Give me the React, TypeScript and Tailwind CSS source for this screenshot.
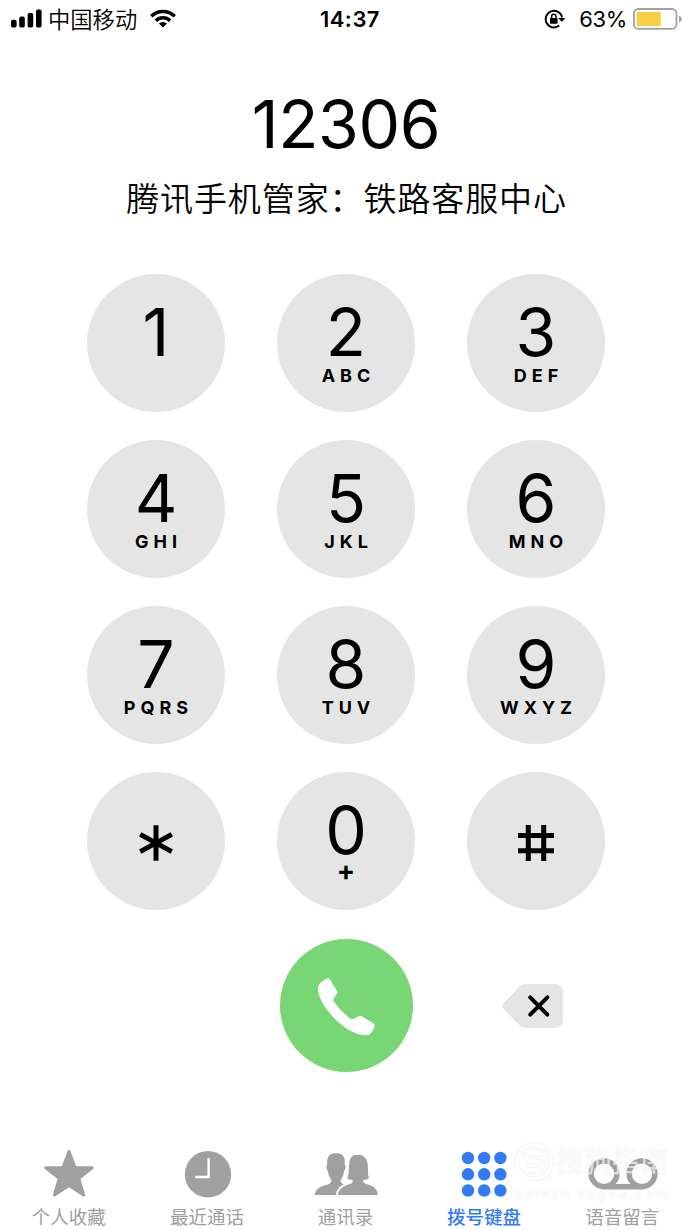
import React, { useState } from 'react';
import { clsx } from 'clsx';

const StarKey = () => (
  <svg viewBox="0 0 34 36" className="mt-[4px] h-9 w-[34px]" stroke="#000" strokeWidth="5">
    <path d="M17 0.3V35.7M1.2 9.4L32.8 26.6M1.2 26.6L32.8 9.4" />
  </svg>
);

const HashKey = () => (
  <svg viewBox="0 0 36 36" className="mt-[4px] size-9" stroke="#000" strokeWidth="5">
    <path d="M10.3 0V36M25.7 0V36M0 10.4H36M0 25.8H36" />
  </svg>
);

const KEYS: { digit: string; letters?: string; icon?: React.ReactNode }[] = [
  { digit: '1' },
  { digit: '2', letters: 'ABC' },
  { digit: '3', letters: 'DEF' },
  { digit: '4', letters: 'GHI' },
  { digit: '5', letters: 'JKL' },
  { digit: '6', letters: 'MNO' },
  { digit: '7', letters: 'PQRS' },
  { digit: '8', letters: 'TUV' },
  { digit: '9', letters: 'WXYZ' },
  { digit: '*', icon: <StarKey /> },
  { digit: '0', letters: '+' },
  { digit: '#', icon: <HashKey /> },
];

const FavoritesIcon = () => (
  <svg viewBox="0 0 50 48" className="h-12 w-[50px]" fill="currentColor" stroke="currentColor" strokeWidth="3" strokeLinejoin="round">
    <path d="M25 1.5L31.2 17.8H48.3L34.8 28.4L39.6 45L25 35.4L10.4 45L15.2 28.4L1.7 17.8H18.8Z" />
  </svg>
);

const RecentsIcon = () => (
  <svg viewBox="0 0 48 48" className="size-12" fill="none">
    <circle cx="24" cy="24.3" r="23.2" fill="currentColor" />
    <path d="M24.6 8V27H11.2" stroke="#fff" strokeWidth="2.4" />
  </svg>
);

const ContactsIcon = () => (
  <svg viewBox="0 0 189 126" className="h-[42px] w-[63px] overflow-visible" fill="currentColor">
    <path d="M0 126C0 108 14 101 36 95C46 92 49 88 49 80C42 72 40 64 39 55C34 50 33 38 37 34C34 8 46 1 63 1C80 1 92 8 89 34C93 38 92 50 87 55C86 64 84 72 77 80C77 88 80 92 90 95L100 126Z" />
    <path
      d="M69 126C70 108 84 99 105 93C112 90 114 88 113 81C106 81 100 79 97 76C103 62 100 50 103 30C104 10 118 4 126 6C136 2 156 10 158 32C160 52 158 62 162 76C158 79 150 81 144 82C143 88 147 91 154 93C176 99 188 108 188 126Z"
      stroke="#fff"
      strokeWidth="12"
      paintOrder="stroke"
    />
    <path d="M-6 126H195V134H-6Z" fill="#fff" />
  </svg>
);

const KeypadIcon = () => (
  <svg viewBox="0 0 48 48" className="size-12" fill="currentColor">
    {[8, 24.3, 40.5].map(cy =>
      [8, 24.2, 40.4].map(cx => <circle key={`${cx}-${cy}`} cx={cx} cy={cy} r="6.2" />)
    )}
  </svg>
);

const VoicemailIcon = () => (
  <svg viewBox="0 0 70 32" className="h-8 w-[70px]" fill="none" stroke="currentColor" strokeWidth="5.4">
    <circle cx="16" cy="15.8" r="12.9" />
    <circle cx="54" cy="15.8" r="12.9" />
    <path d="M16 28.7H54" />
  </svg>
);

const TABS = [
  { label: '个人收藏', icon: <FavoritesIcon /> },
  { label: '最近通话', icon: <RecentsIcon /> },
  { label: '通讯录', icon: <ContactsIcon /> },
  { label: '拨号键盘', icon: <KeypadIcon /> },
  { label: '语音留言', icon: <VoicemailIcon /> },
];

function StatusBar() {
  return (
    <header className="grid h-[38px] grid-cols-3 items-center text-[22px] leading-none">
      <div className="flex items-center pl-[11px]">
        <svg viewBox="0 0 31 19" className="h-[19px] w-[31px]">
          <rect x="0" y="10.8" width="5.6" height="7.7" rx="1.8" />
          <rect x="8.2" y="7.6" width="5.6" height="10.9" rx="1.8" />
          <rect x="16.6" y="4" width="5.6" height="14.5" rx="1.8" />
          <rect x="25" y="0.4" width="5.6" height="18.1" rx="1.8" />
        </svg>
        <span className="mt-[2px] ml-[6px] text-[22.3px] font-[350]">中国移动</span>
        <svg viewBox="0 0 26 19" className="ml-[13px] h-[19px] w-[26px]" fill="none" stroke="#000" strokeWidth="3.5">
          <path d="M1.3 7.2A16.6 16.6 0 0 1 24.7 7.2" />
          <path d="M5.9 11.8A10 10 0 0 1 20.1 11.8" />
          <path d="M13 18.6L8.9 14.6A5.9 5.9 0 0 1 17.1 14.6Z" fill="#000" stroke="none" />
        </svg>
      </div>
      <div className="pl-[8px] text-center font-semibold tracking-[0.5px]">14:37</div>
      <div className="flex items-center justify-end pr-[10px]">
        <svg viewBox="0 0 22 20" className="h-5 w-[22px]" fill="none" stroke="#000" strokeWidth="1.9">
          <path d="M15.2 16.6A8.3 8.3 0 1 1 18.1 8.5" />
          <path d="M14.2 9H21.4L17.8 13Z" fill="#000" stroke="none" />
          <rect x="6" y="9" width="7.6" height="5.8" rx="0.8" fill="#000" stroke="none" />
          <path d="M7.6 9.5V7.4A2.2 2.2 0 0 1 12 7.4V9.5" strokeWidth="1.5" />
        </svg>
        <span className="ml-[13px] tracking-[-0.4px]">63%</span>
        <svg viewBox="0 0 49 22" className="ml-[6px] h-[22px] w-[49px]">
          <rect x="0.9" y="1" width="42.6" height="19.8" rx="4.5" fill="none" stroke="#a0a0a0" strokeWidth="1.8" />
          <rect x="3.6" y="4" width="24.2" height="14" rx="1.2" fill="#f7ce46" />
          <path d="M46 7.5C49.6 9 49.6 13 46 14.5Z" fill="#a0a0a0" />
        </svg>
      </div>
    </header>
  );
}

function Watermark() {
  return (
    <div className="pointer-events-none absolute top-[1142px] left-[515px] w-[160px] text-white/65 [text-shadow:0_0_2px_rgba(0,0,0,0.07)]">
      <div className="flex items-center gap-[3px]">
        <svg viewBox="0 0 38 40" className="h-10 w-[38px] drop-shadow-[0_0_1px_rgba(0,0,0,0.1)]" fill="none" stroke="#fff" strokeWidth="3">
          <circle cx="19" cy="20" r="17" />
          <path d="M27 13C20 9 11 11 12 16C13 21 27 18 27 24C27 29 17 30 11 26" strokeWidth="4.5" />
          <path d="M28 31L34 37" />
        </svg>
        <span className="text-[28px] leading-10 font-medium whitespace-nowrap">搜狗指南</span>
      </div>
      <div className="mt-[3px] text-[14px] leading-[18px] font-bold tracking-[1.7px] whitespace-nowrap">zhinan.sogou.com</div>
    </div>
  );
}

export default function App() {
  const [number, setNumber] = useState('12306');
  const [activeTab, setActiveTab] = useState(3);

  return (
    <div className="relative flex h-[1230px] w-[692px] flex-col overflow-hidden bg-white font-[Inter,'Noto_Sans_CJK_SC',sans-serif] text-black">
      <StatusBar />

      {/* Dialed number */}
      <section className="flex h-[236px] flex-col items-center pt-[50px]">
        <div className="h-[72px] text-[66px] leading-[72px] tracking-[-0.4px]">{number}</div>
        <div className="mt-[15px] pl-px text-[33px] leading-[48px] font-[350] tracking-[0.9px]">腾讯手机管家：铁路客服中心</div>
      </section>

      {/* Keypad */}
      <main className="grid grid-cols-[repeat(3,138px)] justify-center gap-x-[52px] gap-y-7">
        {KEYS.map(key => (
          <button
            key={key.digit}
            aria-label={key.digit}
            onClick={() => setNumber(prev => prev + key.digit)}
            className={clsx(
              'flex size-[138px] flex-col items-center rounded-full bg-[#e5e5e5]',
              key.icon ? 'justify-center' : 'pt-[28px]'
            )}
          >
            {key.icon ?? <span className="text-[66px] leading-[60px]">{key.digit}</span>}
            {key.letters && (
              <span
                className={clsx(
                  'font-bold',
                  key.letters === '+' ? 'text-[27px] leading-[22px]' : 'pl-[5px] text-[18px] leading-7 tracking-[5px]'
                )}
              >
                {key.letters}
              </span>
            )}
          </button>
        ))}
      </main>

      {/* Call / delete */}
      <div className="mt-[29px] grid grid-cols-[repeat(3,138px)] items-center justify-center gap-x-[52px]">
        <button className="col-start-2 flex size-[133px] items-center justify-center justify-self-center rounded-full bg-[#78d674]">
          <svg viewBox="0 0 57 58" className="mt-[2px] ml-px h-[58px] w-[57px]" fill="#fff">
            <path d="M8.6 0.8Q10.7 -0.4 11.9 1.6L18.8 12.6Q19.8 14.2 18.8 15.8L15.8 20.4Q14.8 22.2 16 23.8C20.5 30 26.5 36 32 40.6Q33.6 41.8 35.4 41L40.6 38.2Q42.2 37.3 43.8 38.2L55.6 45.4Q57.2 46.4 56.6 48.2C55.2 52.6 53 57 48 57.3C28 57.5 0 28 0 10.5C0.2 5.5 4.2 3 8.6 0.8Z" />
          </svg>
        </button>
        <button onClick={() => setNumber(prev => prev.slice(0, -1))} className="ml-[35px]">
          <svg viewBox="0 0 61 44" className="h-11 w-[61px]">
            <path d="M24 0H53Q61 0 61 8V36Q61 44 53 44H24Q20 44 17 41L1.2 24.6Q-0.8 22 1.2 19.4L17 3Q20 0 24 0Z" fill="#e5e5e5" />
            <path d="M28.2 13.4L45.4 30.6M45.4 13.4L28.2 30.6" stroke="#000" strokeWidth="4" strokeLinecap="round" />
          </svg>
        </button>
      </div>

      {/* Tab bar */}
      <nav className="mt-[78px] flex h-20">
        {TABS.map((tab, idx) => (
          <button
            key={tab.label}
            onClick={() => setActiveTab(idx)}
            className={clsx(
              'flex flex-1 flex-col items-center',
              idx === activeTab ? 'font-medium text-[#347af7]' : 'text-[#a0a0a0]'
            )}
          >
            <span className="flex h-12 items-center">{tab.icon}</span>
            <span className="mt-[7px] pr-px text-[18.5px] leading-6">{tab.label}</span>
          </button>
        ))}
      </nav>

      <Watermark />
    </div>
  );
}
